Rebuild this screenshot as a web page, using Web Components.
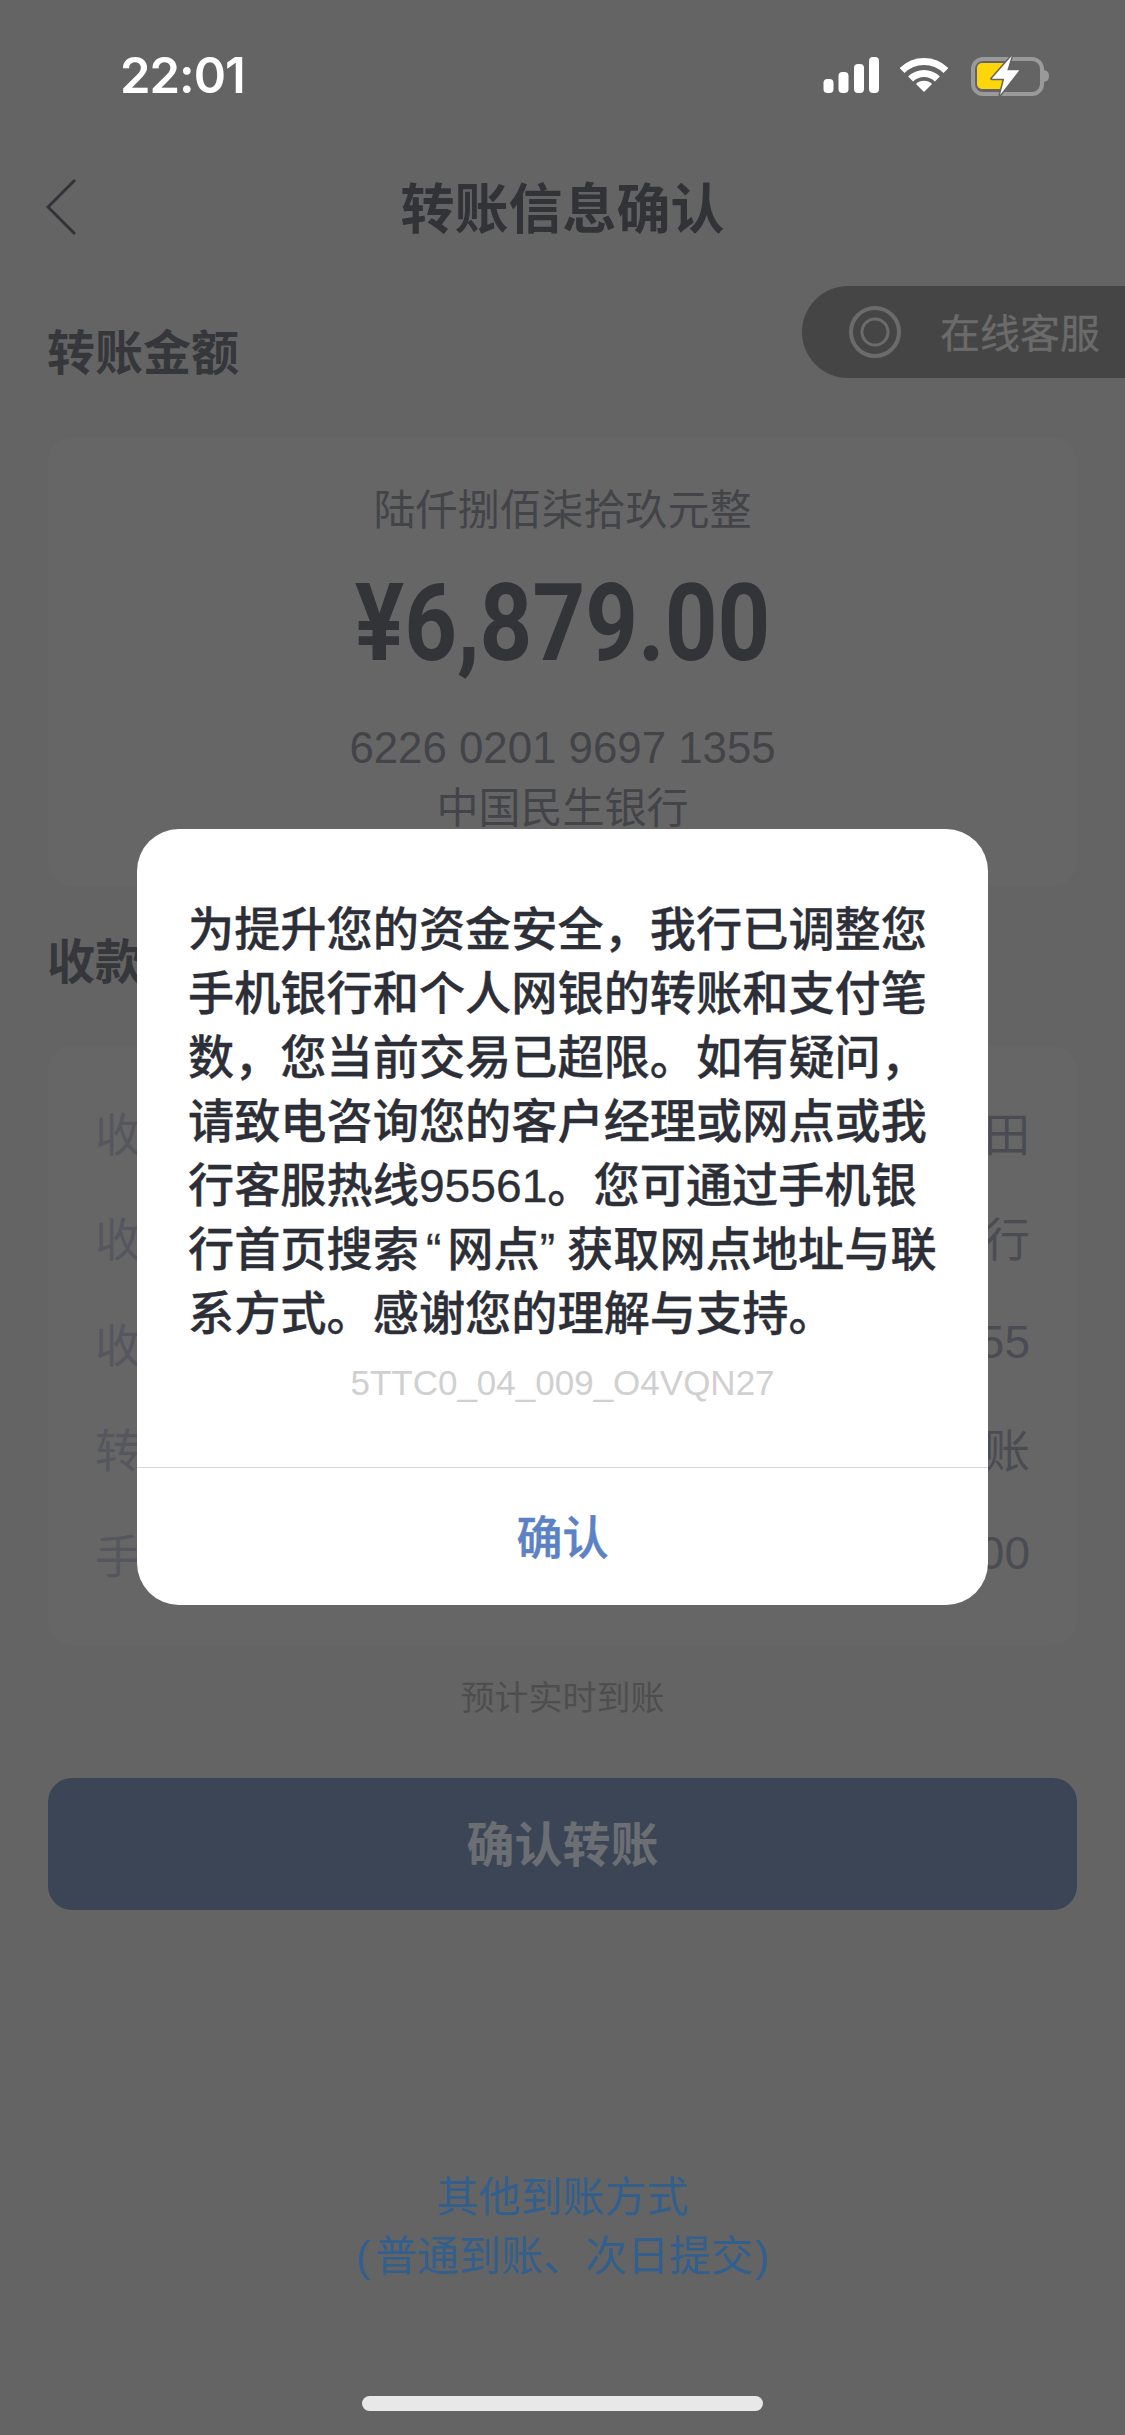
<!DOCTYPE html>
<html lang="zh-CN">
<head>
<meta charset="utf-8">
<title>转账信息确认</title>
<style>
  html, body { margin: 0; background: #646464; }
  body {
    width: 1125px;
    height: 2435px;
    overflow: hidden;
    font-family: "Liberation Sans", "Noto Sans CJK SC", sans-serif;
  }
</style>
</head>
<body>
<transfer-page>
  <status-bar></status-bar>
  <nav-bar>转账信息确认</nav-bar>
  <service-pill>在线客服</service-pill>

  <section-title style="margin-top:56px">转账金额</section-title>
  <amount-card
    words="陆仟捌佰柒拾玖元整"
    amount="¥6,879.00"
    account="6226 0201 9697 1355"
    bank="中国民生银行"></amount-card>

  <section-title style="margin-top:45px">收款信息</section-title>
  <info-card>
    <info-row label="收款人">田</info-row>
    <info-row label="收款银行">中国民生银行</info-row>
    <info-row label="收款账号">6226 0201 9697 1355</info-row>
    <info-row label="转账方式">实时到账</info-row>
    <info-row label="手续费">¥0.00</info-row>
  </info-card>

  <hint-text>预计实时到账</hint-text>
  <primary-button>确认转账</primary-button>
  <other-link>其他到账方式<br><span style="padding-right:5px">(</span>普通到账、次日提交<span style="padding-left:2px">)</span></other-link>
  <home-bar></home-bar>

  <alert-dialog code="5TTC0_04_009_O4VQN27" action="确认">
    <div>为提升您的资金安全，我行已调整您</div>
    <div>手机银行和个人网银的转账和支付笔</div>
    <div>数，您当前交易已超限。如有疑问，</div>
    <div>请致电咨询您的客户经理或网点或我</div>
    <div>行客服热线95561。您可通过手机银</div>
    <div>行首页搜索<span style="padding:0 6px 0 7px">“</span>网点<span style="padding-right:12px">”</span>获取网点地址与联</div>
    <div>系方式。感谢您的理解与支持。</div>
  </alert-dialog>
</transfer-page>

<script>
const define = (name, html, attrs = []) => {
  customElements.define(name, class extends HTMLElement {
    constructor() {
      super()
      this.attachShadow({ mode: 'open' }).innerHTML = html
    }

    connectedCallback() {
      attrs.forEach((attr) => {
        this.shadowRoot.querySelector(`.${attr}`).textContent = this.getAttribute(attr)
      })
    }
  })
}

define('transfer-page', `
  <style>
    :host {
      position: relative;
      display: flex;
      flex-direction: column;
      width: 1125px;
      height: 2435px;
      background: #646464;
    }
  </style>
  <slot></slot>
`)

define('status-bar', `
  <style>
    :host {
      display: flex;
      align-items: center;
      justify-content: space-between;
      flex: none;
      height: 150px;
      padding: 0 73px 0 120px;
    }
    .time {
      font: 600 49px Inter, "Liberation Sans", sans-serif;
      letter-spacing: -1px;
      color: #fff;
    }
    .icons { display: flex; align-items: center; gap: 20px; }
    svg { display: block; }
  </style>
  <span class="time">22:01</span>
  <div class="icons">
    <svg width="57" height="36" viewBox="0 0 57 36" fill="#fff">
      <rect x="0.5" y="22" width="10" height="14" rx="4"/>
      <rect x="15.5" y="15" width="10" height="21" rx="4"/>
      <rect x="31" y="7" width="10" height="29" rx="4"/>
      <rect x="46" y="0" width="10" height="36" rx="4"/>
    </svg>
    <svg width="48" height="36" viewBox="0 0 48 36" fill="none" stroke="#fff" stroke-width="7">
      <path d="M2.1 13.6A31 31 0 0 1 45.9 13.6"/>
      <path d="M10.6 22.1A19 19 0 0 1 37.4 22.1"/>
      <path d="M24 35L16 27A11.3 11.3 0 0 1 32 27Z" fill="#fff" stroke="none"/>
    </svg>
    <svg width="84" height="44" viewBox="0 0 84 44">
      <rect x="5" y="6" width="69" height="35" rx="10" fill="none" stroke="#9a9a9a" stroke-width="4"/>
      <path d="M76 17C80 18 81 20 81 23C81 26 80 28 76 29Z" fill="#9a9a9a"/>
      <rect x="9" y="10" width="30" height="26" rx="5" fill="#ffd60a"/>
      <path d="M43.7 3L23.7 25.7H36.3L32 42L51.3 17.3H39.3Z" fill="#fff" stroke="#646464" stroke-width="3" paint-order="stroke" stroke-linejoin="round"/>
    </svg>
  </div>
`)

define('nav-bar', `
  <style>
    :host {
      position: relative;
      box-sizing: border-box;
      display: flex;
      align-items: center;
      justify-content: center;
      flex: none;
      height: 116px;
      padding-bottom: 6px;
      font-size: 54px;
      font-weight: 700;
      color: #323337;
    }
    svg { position: absolute; left: 46px; top: 28px; }
  </style>
  <svg width="30" height="58" viewBox="0 0 30 58" fill="none" stroke="#323337" stroke-width="3">
    <path d="M29 2L2 29L29 56"/>
  </svg>
  <slot></slot>
`)

define('service-pill', `
  <style>
    :host {
      position: absolute;
      left: 802px;
      top: 286px;
      box-sizing: border-box;
      display: flex;
      align-items: center;
      gap: 39px;
      width: 323px;
      height: 92px;
      padding-left: 47px;
      border-radius: 46px 0 0 46px;
      background: #454545;
      font-size: 40px;
      -webkit-text-stroke: .4px #6b6b6b;
      color: #6b6b6b;
    }
    svg { display: block; flex: none; }
    span { margin-top: -3px; }
  </style>
  <svg width="52" height="52" viewBox="0 0 52 52" fill="none" stroke="#6b6b6b">
    <circle cx="26" cy="26" r="24" stroke-width="4"/>
    <circle cx="26" cy="26" r="13" stroke-width="3"/>
  </svg>
  <span><slot></slot></span>
`)

define('section-title', `
  <style>
    :host {
      display: block;
      flex: none;
      height: 64px;
      margin-left: 47px;
      font-size: 48px;
      font-weight: 700;
      line-height: 64px;
      color: #36373b;
    }
  </style>
  <slot></slot>
`)

define('amount-card', `
  <style>
    :host {
      box-sizing: border-box;
      display: flex;
      flex-direction: column;
      align-items: center;
      flex: none;
      height: 449px;
      margin: 51px 48px 0;
      padding-top: 44px;
      border-radius: 24px;
      background: #666;
      color: #434448;
    }
    .words { height: 60px; font-size: 42px; line-height: 60px; }
    .amount {
      height: 120px;
      margin-top: 23px;
      font: 700 107px/120px Roboto, "Liberation Sans", sans-serif;
      color: #333438;
      transform: scaleX(.86);
      white-space: nowrap;
    }
    .account { height: 50px; margin-top: 39px; font-size: 43.8px; line-height: 50px; }
    .bank { height: 50px; margin-top: 11px; font-size: 42px; line-height: 50px; }
  </style>
  <div class="words"></div>
  <div class="amount"></div>
  <div class="account"></div>
  <div class="bank"></div>
`, ['words', 'amount', 'account', 'bank'])

define('info-card', `
  <style>
    :host {
      box-sizing: border-box;
      display: flex;
      flex-direction: column;
      flex: none;
      height: 599px;
      margin: 51px 48px 0;
      padding: 32px 47px 0 47px;
      border-radius: 24px;
      background: #666;
    }
  </style>
  <slot></slot>
`)

define('info-row', `
  <style>
    :host {
      display: flex;
      align-items: center;
      justify-content: space-between;
      flex: none;
      height: 105.5px;
      font-size: 46px;
      color: #4b4c53;
    }
    .label { color: #55565e; }
  </style>
  <span class="label"></span>
  <span><slot></slot></span>
`, ['label'])

define('hint-text', `
  <style>
    :host {
      display: block;
      flex: none;
      height: 50px;
      margin-top: 28px;
      font-size: 34px;
      line-height: 50px;
      text-align: center;
      color: #4e4e4e;
    }
  </style>
  <slot></slot>
`)

define('primary-button', `
  <style>
    :host {
      box-sizing: border-box;
      display: flex;
      align-items: center;
      justify-content: center;
      flex: none;
      height: 132px;
      margin: 55px 48px 0;
      padding-bottom: 6px;
      border-radius: 24px;
      background: #3c4556;
      font-size: 48px;
      font-weight: 700;
      color: #6b6e73;
    }
  </style>
  <slot></slot>
`)

define('other-link', `
  <style>
    :host {
      display: block;
      flex: none;
      height: 118px;
      margin-top: 258px;
      font-size: 42px;
      line-height: 59px;
      text-align: center;
      color: #335f8c;
    }
  </style>
  <slot></slot>
`)

define('home-bar', `
  <style>
    :host {
      display: block;
      flex: none;
      width: 401px;
      height: 15px;
      margin: 110px auto 0;
      border-radius: 8px;
      background: #e8e8e8;
    }
  </style>
`)

define('alert-dialog', `
  <style>
    :host {
      position: absolute;
      left: 137px;
      top: 829px;
      box-sizing: border-box;
      display: flex;
      flex-direction: column;
      width: 851px;
      height: 776px;
      padding-top: 69px;
      border-radius: 42px;
      background: #fff;
    }
    .body {
      padding-left: 51px;
      font-size: 46.2px;
      font-weight: 500;
      line-height: 64px;
      white-space: nowrap;
      -webkit-text-stroke: .3px #2d2f38;
      color: #2d2f38;
    }
    .code {
      height: 50px;
      margin-top: 12px;
      font-size: 35px;
      line-height: 50px;
      text-align: center;
      color: #d0d0d0;
    }
    .action {
      box-sizing: border-box;
      display: flex;
      align-items: center;
      justify-content: center;
      flex: 1;
      margin-top: 59px;
      padding-bottom: 6px;
      border-top: 1px solid #d8d8d8;
      font-size: 46px;
      font-weight: 500;
      -webkit-text-stroke: .5px #5b82c4;
      color: #5b82c4;
    }
  </style>
  <div class="body"><slot></slot></div>
  <div class="code"></div>
  <div class="action"></div>
`, ['code', 'action'])
</script>
</body>
</html>
